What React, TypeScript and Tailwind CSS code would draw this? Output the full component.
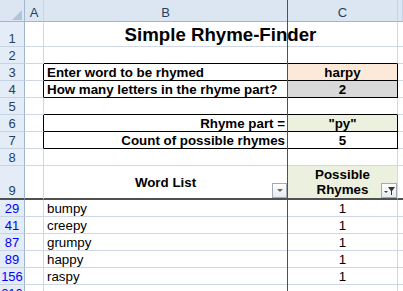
import React from "react";

const F = "font-['Liberation_Sans',Arial,sans-serif]";

const cA = "w-[19px] shrink-0 border-r border-b border-r-[#d0d7e5] border-b-[#d0d7e5]";
const cAk = "w-[19px] shrink-0 border-r border-b border-r-black border-b-[#d0d7e5]";
const cA9 = "w-[19px] shrink-0 border-r border-b-2 border-r-[#d0d7e5] border-b-[#505050]";
const cB = "w-[244px] shrink-0 border-r border-b border-r-[#d0d7e5] border-b-[#d0d7e5]";
const cBtop = "w-[244px] shrink-0 border-r border-b border-r-[#d0d7e5] border-b-black";
const cBbox = "w-[244px] shrink-0 border-r border-b border-r-black border-b-black";
const cB9 = "relative w-[244px] shrink-0 border-r border-b-2 border-r-[#d0d7e5] border-b-[#505050]";
const cC = "w-[110px] shrink-0 border-r border-b border-r-[#d0d7e5] border-b-[#d0d7e5]";
const cCtop = "w-[110px] shrink-0 border-r border-b border-r-[#d0d7e5] border-b-black";
const cCbox = "w-[110px] shrink-0 border-r border-b border-r-black border-b-black";
const cC9 = "relative w-[110px] shrink-0 border-r border-b-2 border-r-[#d0d7e5] border-b-[#505050] bg-[#ebf1de]";
const cD = "flex-1 border-b border-b-[#d0d7e5]";
const cD9 = "flex-1 border-b-2 border-b-[#505050]";

function Row({
  h,
  n,
  blue,
  frozen,
  children,
}: {
  h: string;
  n: string;
  blue?: boolean;
  frozen?: boolean;
  children: React.ReactNode;
}) {
  return (
    <div className={`flex shrink-0 ${h}`}>
      <div
        className={`w-[25px] shrink-0 bg-[#e4ecf7] border-r border-r-[#9eb6ce] flex items-end justify-center text-[13px] leading-[14px] ${
          frozen ? "border-b-2 border-b-[#505050]" : "border-b border-b-[#c5d3e3]"
        } ${blue ? "text-[#0000ff]" : "text-[#273f5c]"}`}
      >
        {n}
      </div>
      {children}
    </div>
  );
}

function ColHead({ w, children }: { w: string; children?: React.ReactNode }) {
  return (
    <div
      className={`${w} bg-[#dce6f2] border-b border-b-[#9eb6ce] border-r border-r-[#c5d3e3] flex justify-center pt-[6px] text-[13px] leading-[14px] text-[#273f5c]`}
    >
      {children}
    </div>
  );
}

function Data({ word, n }: { word: string; n: string }) {
  return (
    <Row h="h-[17px]" n={n} blue>
      <div className={cA} />
      <div className={`${cB} flex items-end pl-[3px] text-[13.33px] leading-[15px] text-black`}>{word}</div>
      <div className={`${cC} flex items-end justify-center text-[13.33px] leading-[15px] text-black`}>1</div>
      <div className={cD} />
    </Row>
  );
}

export default function App() {
  return (
    <div className={`relative w-[403px] h-[291px] overflow-hidden bg-white flex flex-col ${F}`}>
      {/* column headers */}
      <div className="flex h-[22px] shrink-0">
        <div className="relative w-[25px] shrink-0 bg-[#dce6f2] border-r border-b border-r-[#9eb6ce] border-b-[#9eb6ce]">
          <svg className="absolute left-0 top-0" width="24" height="21">
            <polygon points="22,10 22,20 12,20" fill="#b3c3d7" />
          </svg>
        </div>
        <ColHead w="w-[19px] shrink-0">A</ColHead>
        <ColHead w="w-[244px] shrink-0">B</ColHead>
        <ColHead w="w-[110px] shrink-0">C</ColHead>
        <ColHead w="flex-1">{""}</ColHead>
      </div>

      {/* row 1 */}
      <Row h="h-[25px]" n="1">
        <div className={cA} />
        <div className="w-[354px] shrink-0 border-r border-b border-r-[#d0d7e5] border-b-[#d0d7e5] flex items-end justify-center pb-[1px] text-[18.67px] leading-[21px] font-bold text-black">
          Simple Rhyme-Finder
        </div>
        <div className={cD} />
      </Row>

      {/* row 2 */}
      <Row h="h-[17px]" n="2">
        <div className={cA} />
        <div className={cBtop} />
        <div className={cCtop} />
        <div className={cD} />
      </Row>

      {/* row 3 */}
      <Row h="h-[17px]" n="3">
        <div className={cAk} />
        <div className={`${cBbox} flex items-end pl-[3px] text-[13.33px] leading-[15px] font-bold text-black`}>
          Enter word to be rhymed
        </div>
        <div className={`${cCbox} bg-[#fde9d9] flex items-end justify-center text-[13.33px] leading-[15px] font-bold text-black`}>
          harpy
        </div>
        <div className={cD} />
      </Row>

      {/* row 4 */}
      <Row h="h-[17px]" n="4">
        <div className={cAk} />
        <div className={`${cBbox} flex items-end pl-[3px] text-[13.33px] leading-[15px] font-bold text-black`}>
          How many letters in the rhyme part?
        </div>
        <div className={`${cCbox} bg-[#d9d9d9] flex items-end justify-center text-[13.33px] leading-[15px] font-bold text-black`}>
          2
        </div>
        <div className={cD} />
      </Row>

      {/* row 5 */}
      <Row h="h-[17px]" n="5">
        <div className={cA} />
        <div className={cBtop} />
        <div className={cCtop} />
        <div className={cD} />
      </Row>

      {/* row 6 */}
      <Row h="h-[17px]" n="6">
        <div className={cAk} />
        <div className={`${cBbox} flex items-end justify-end pr-[2px] text-[13.33px] leading-[15px] font-bold text-black`}>
          Rhyme part =
        </div>
        <div className={`${cCbox} bg-[#ebf1de] flex items-end justify-center text-[13.33px] leading-[15px] font-bold text-black`}>
          "py"
        </div>
        <div className={cD} />
      </Row>

      {/* row 7 */}
      <Row h="h-[17px]" n="7">
        <div className={cAk} />
        <div className={`${cBbox} flex items-end justify-end pr-[2px] text-[13.33px] leading-[15px] font-bold text-black`}>
          Count of possible rhymes
        </div>
        <div className={`${cCbox} flex items-end justify-center text-[13.33px] leading-[15px] font-bold text-black`}>
          5
        </div>
        <div className={cD} />
      </Row>

      {/* row 8 */}
      <Row h="h-[17px]" n="8">
        <div className={cA} />
        <div className={cB} />
        <div className={cC} />
        <div className={cD} />
      </Row>

      {/* row 9 */}
      <Row h="h-[34px]" n="9" frozen>
        <div className={cA9} />
        <div className={`${cB9} flex items-center justify-center text-[13.33px] leading-[15px] font-bold text-black`}>
          Word List
          <div className="absolute right-0 bottom-0 w-[15px] h-[15px] border border-[#a3abb6] bg-gradient-to-b from-white to-[#e6eaf0]">
            <svg className="absolute left-0 top-0" width="13" height="13">
              <polygon points="4,5 10,5 7,8" fill="#6b6b6b" />
            </svg>
          </div>
        </div>
        <div className={`${cC9} flex flex-col items-center justify-center text-[13.33px] leading-[15px] font-bold text-black`}>
          <span>Possible</span>
          <span>Rhymes</span>
          <div className="absolute right-0 bottom-0 w-[16px] h-[15px] border border-[#a3abb6] bg-gradient-to-b from-white to-[#e6eaf0]">
            <svg className="absolute left-0 top-0" width="14" height="13">
              <polygon points="2,7 6,7 4,9" fill="#444" />
              <polygon points="6,3 13,3 10,7 10,11 9,11 9,7" fill="#333" />
            </svg>
          </div>
        </div>
        <div className={cD9} />
      </Row>

      <Data word="bumpy" n="29" />
      <Data word="creepy" n="41" />
      <Data word="grumpy" n="87" />
      <Data word="happy" n="89" />
      <Data word="raspy" n="156" />
      <Row h="h-[17px]" n="210" blue>
        <div className={cA} />
        <div className={cB} />
        <div className={cC} />
        <div className={cD} />
      </Row>

      {/* frozen pane vertical split */}
      <div className="absolute left-[287px] top-0 w-px h-full bg-[#505050]" />
    </div>
  );
}
